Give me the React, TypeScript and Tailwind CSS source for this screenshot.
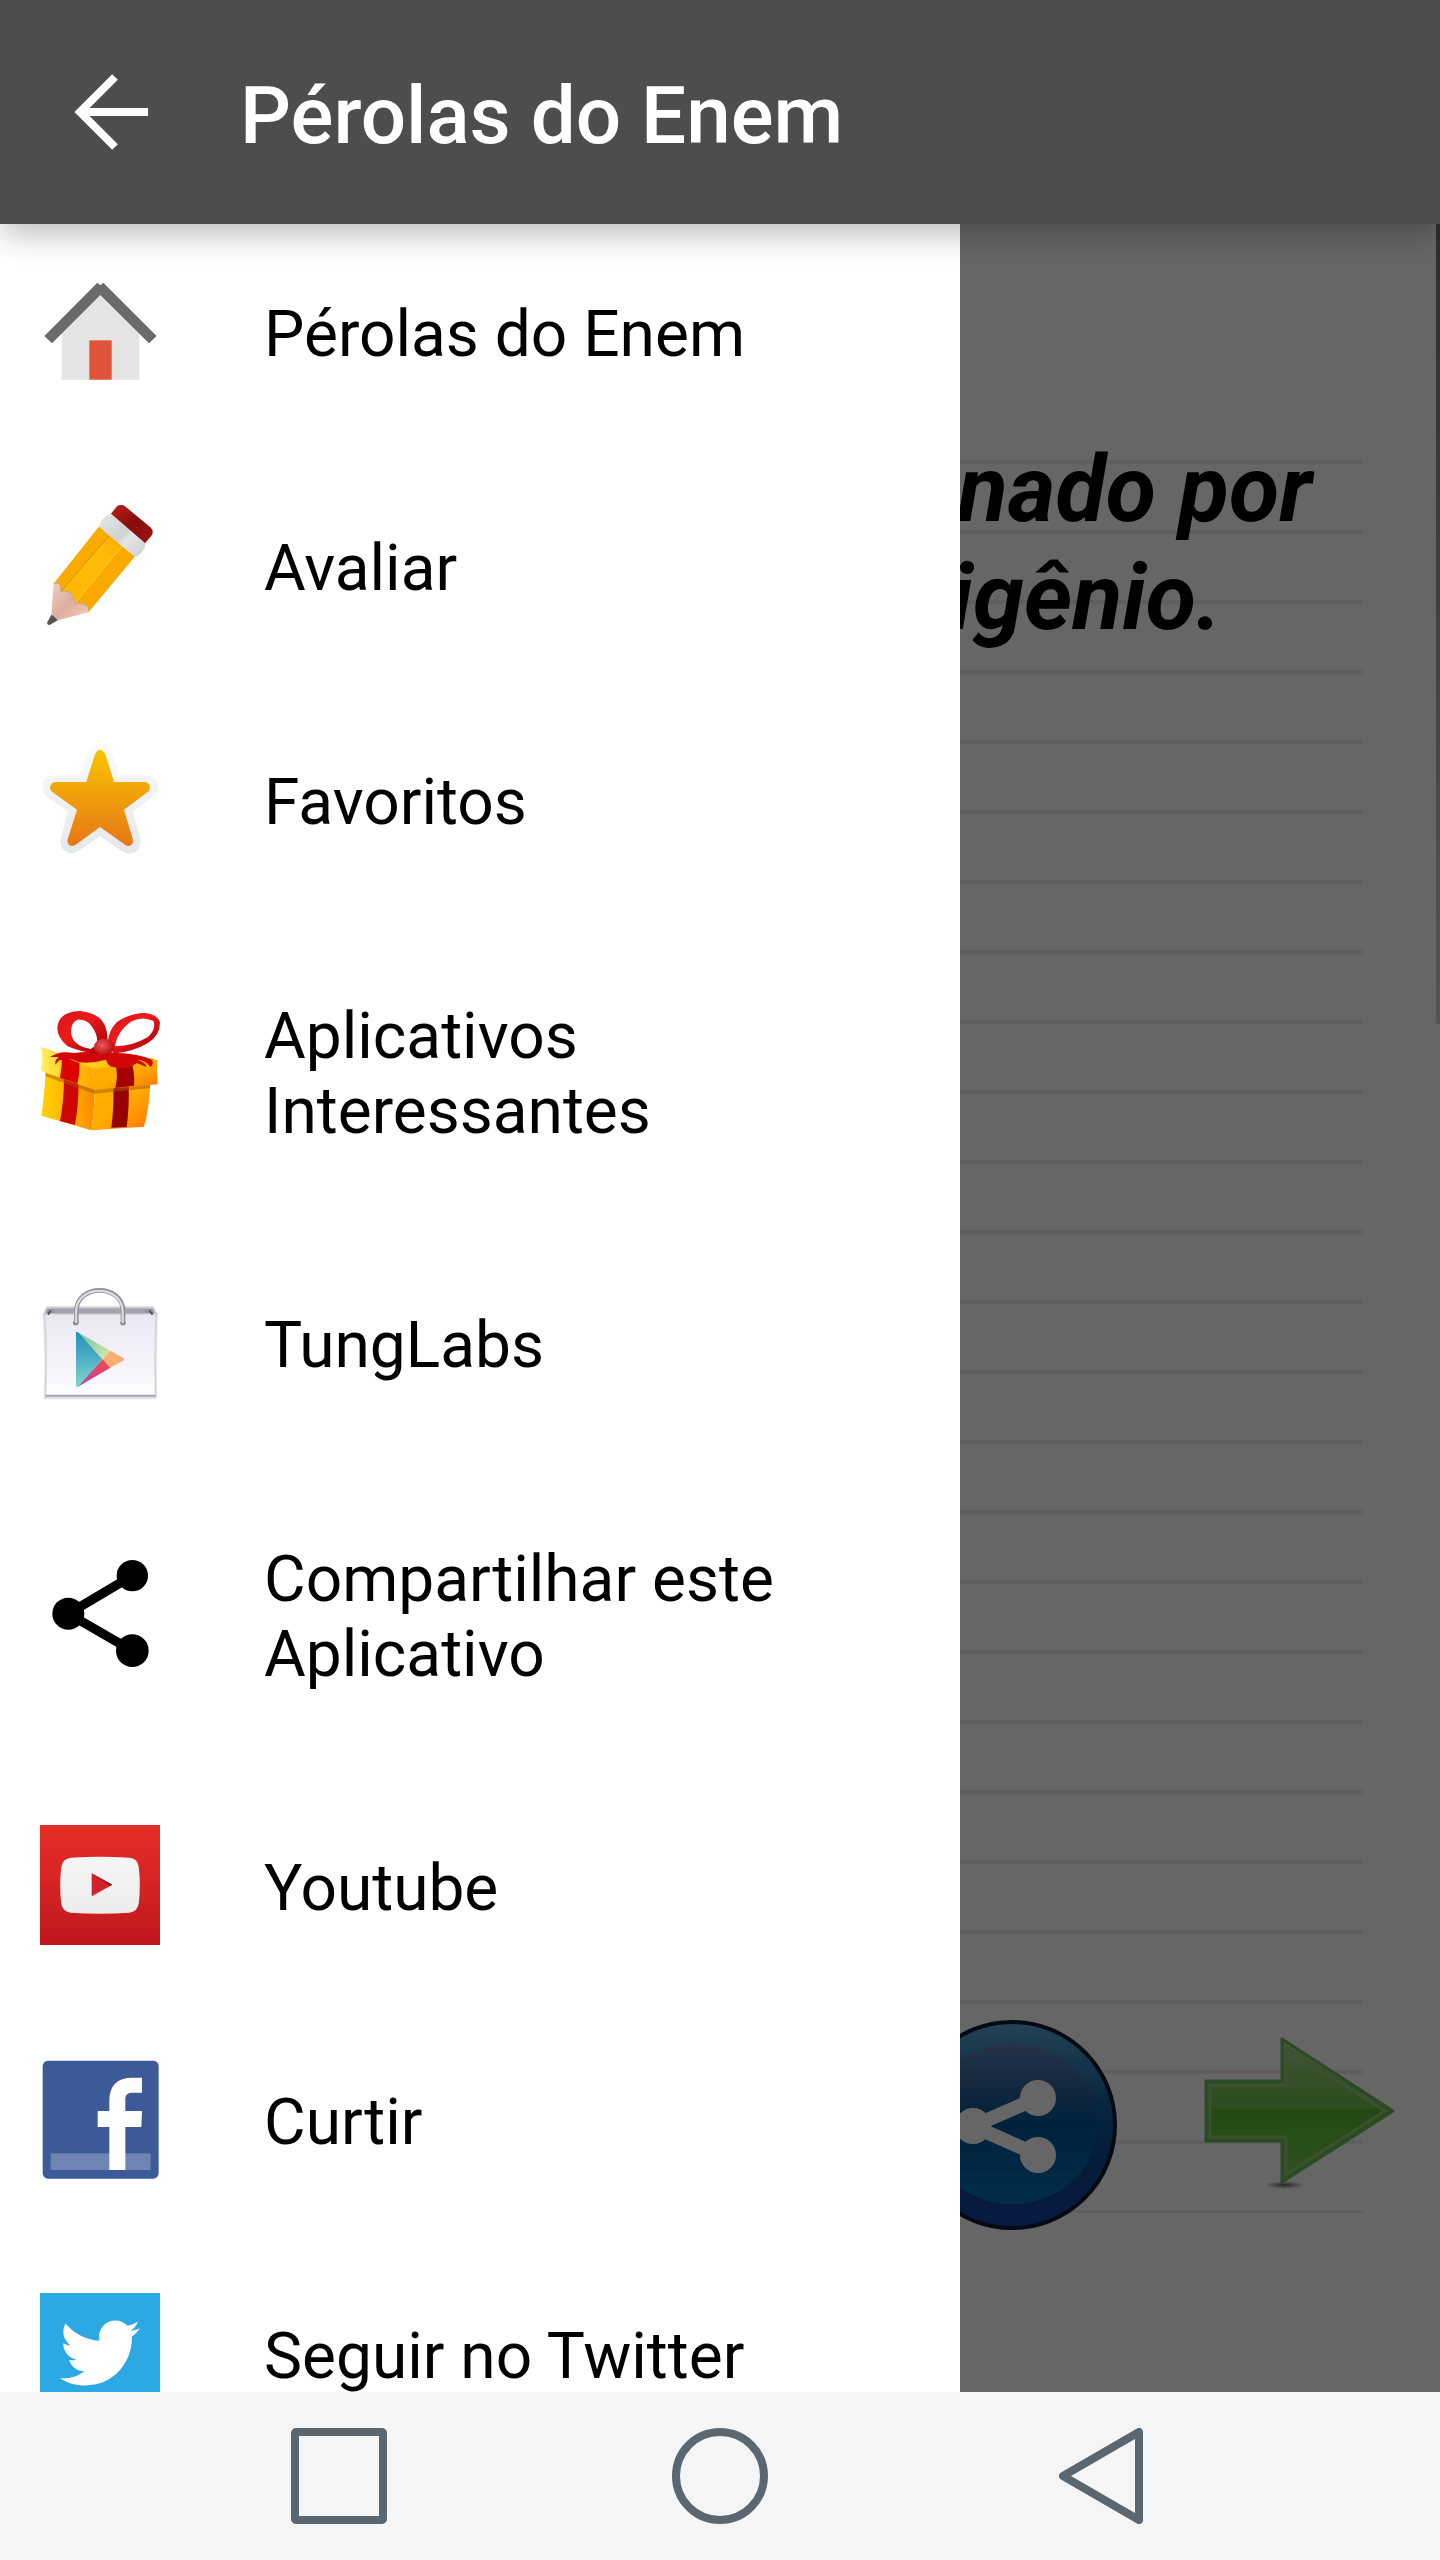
import type { ReactNode } from "react";
import { FaTwitter } from "react-icons/fa";

interface MenuItem {
  label: string;
  icon: ReactNode;
}

function HomeIcon() {
  return (
    <svg viewBox="60 33 360 360" className="size-full">
      <path d="M125 218 L241 100 L358 218 V359 H125 Z" fill="#e4e4e4" />
      <rect x="208" y="241" width="67" height="118" fill="#e15339" />
      <path
        d="M73 228 L232 68 L241 76 L250 68 L410 228 L387 250 L241 105 L96 250 Z"
        fill="#6a6a6a"
      />
    </svg>
  );
}

function PencilIcon() {
  return (
    <svg viewBox="60 45 360 360" className="size-full">
      <defs>
        <linearGradient id="pencilRed" x1="0" y1="0" x2="1" y2="1">
          <stop offset="0" stopColor="#c01f1c" />
          <stop offset="0.5" stopColor="#860d0b" />
          <stop offset="1" stopColor="#a01614" />
        </linearGradient>
        <linearGradient id="pencilBody" x1="0" y1="1" x2="1" y2="0">
          <stop offset="0" stopColor="#ffb400" />
          <stop offset="0.6" stopColor="#ffbc0a" />
          <stop offset="1" stopColor="#f5a500" />
        </linearGradient>
        <linearGradient id="pencilWood" x1="0" y1="0" x2="1" y2="1">
          <stop offset="0" stopColor="#efcfc4" />
          <stop offset="0.5" stopColor="#dcae9f" />
          <stop offset="1" stopColor="#f6cfae" />
        </linearGradient>
        <linearGradient id="pencilMetal" x1="0" y1="0" x2="1" y2="1">
          <stop offset="0" stopColor="#e6e8e8" />
          <stop offset="0.5" stopColor="#cfd2d3" />
          <stop offset="0.6" stopColor="#e4e6e6" />
          <stop offset="1" stopColor="#cbcecf" />
        </linearGradient>
      </defs>
      <path
        d="M272 72 L290 50 Q300 41 313 47 L391 112 Q402 122 396 135 L374 161 Z"
        fill="url(#pencilRed)"
      />
      <path
        d="M237 110 L345 199 L205 367 L165 340 L122 305 L101 281 Z"
        fill="url(#pencilBody)"
      />
      <path d="M237 110 L268 136 L122 305 L101 281 Z" fill="#f9ac00" />
      <path d="M307 168 L345 199 L205 367 L165 340 Z" fill="#f9a900" />
      <path d="M268 136 L122 305" stroke="#dd9200" strokeWidth="3" />
      <path d="M307 168 L165 340" stroke="#ffcf3d" strokeWidth="3" />
      <path
        d="M237 110 Q238 100 246 90 Q258 72 274 72 L374 158 Q380 170 368 182 Q357 198 345 201 Z"
        fill="url(#pencilMetal)"
      />
      <path
        d="M101 281 Q118 275 122 290 L122 304 Q145 300 156 314 Q166 325 164 342 Q185 335 200 347 Q209 355 205 367 L113 391 L94 374 Z"
        fill="url(#pencilWood)"
      />
      <path
        d="M101 281 Q118 275 122 290 L122 304 Q145 300 156 314 Q166 325 164 342 Q185 335 200 347 Q207 353 206 362"
        fill="none"
        stroke="#c9a58f"
        strokeWidth="3"
      />
      <path d="M94 374 Q103 378 113 391 L89 405 Q80 405 82 397 Z" fill="#555" />
    </svg>
  );
}

function StarIcon() {
  return (
    <svg viewBox="60 27 360 360" className="size-full">
      <defs>
        <linearGradient id="starFill" x1="0" y1="0" x2="0" y2="1">
          <stop offset="0" stopColor="#fac400" />
          <stop offset="1" stopColor="#e67717" />
        </linearGradient>
        <linearGradient id="starEdge" x1="0" y1="0" x2="0" y2="1">
          <stop offset="0" stopColor="#fbfbfb" />
          <stop offset="1" stopColor="#e5e8e9" />
        </linearGradient>
      </defs>
      <path
        d="M207 62 Q216 40 240 38 Q264 40 273 62 L298 136 H376 Q414 138 415 172 Q414 186 402 196 L338 246 L361 326 Q364 366 330 371 Q318 372 306 364 L240 318 L174 364 Q162 372 150 370 Q116 362 122 326 L144 246 L82 200 Q66 188 68 170 Q72 136 106 136 H182 Z"
        fill="url(#starEdge)"
      />
      <path
        d="M225 72 Q240 46 256 72 L282 156 H374 Q390 158 390 172 Q390 180 384 185 L312 239 L338 326 Q342 345 327 348 Q321 348 316 345 L240 291 L166 345 Q160 348 154 348 Q140 344 143 328 L171 239 L97 186 Q90 180 90 172 Q92 158 106 156 H199 Z"
        fill="url(#starFill)"
      />
    </svg>
  );
}

function GiftIcon() {
  return (
    <svg viewBox="60 60 360 360" className="size-full">
      <defs>
        <linearGradient id="giftLeft" x1="0" y1="0" x2="1" y2="0">
          <stop offset="0" stopColor="#ffd000" />
          <stop offset="0.6" stopColor="#ffae00" />
          <stop offset="1" stopColor="#f98a00" />
        </linearGradient>
        <linearGradient id="giftRight" x1="0" y1="0" x2="1" y2="1">
          <stop offset="0" stopColor="#ffb000" />
          <stop offset="0.5" stopColor="#ffab00" />
          <stop offset="1" stopColor="#ff7400" />
        </linearGradient>
        <linearGradient id="giftTop" x1="0" y1="0" x2="1" y2="0">
          <stop offset="0" stopColor="#fff06a" />
          <stop offset="0.4" stopColor="#ffd21c" />
          <stop offset="1" stopColor="#ffa400" />
        </linearGradient>
        <linearGradient id="giftBow" x1="0" y1="0" x2="1" y2="1">
          <stop offset="0" stopColor="#d2161b" />
          <stop offset="0.4" stopColor="#ee1a1c" />
          <stop offset="1" stopColor="#9c0006" />
        </linearGradient>
        <radialGradient id="giftKnot" cx="0.4" cy="0.4" r="0.6">
          <stop offset="0" stopColor="#ea5a5c" />
          <stop offset="1" stopColor="#bd0c14" />
        </radialGradient>
      </defs>
      <path d="M77 240 Q74 310 64 374 L214 418 Q226 350 222 280 Z" fill="url(#giftLeft)" />
      <path d="M222 285 Q226 350 214 418 L372 407 Q388 350 391 275 Z" fill="url(#giftRight)" />
      <path d="M132 258 Q132 330 120 390 L165 402 Q176 340 176 270 Z" fill="#cc0505" />
      <path d="M280 285 Q282 350 274 410 L320 408 Q328 350 326 280 Z" fill="#960000" />
      <path d="M77 240 L222 294 L391 280 L390 292 L222 308 L77 256 Z" fill="#a85a00" opacity="0.5" />
      <path d="M64 168 L110 184 L270 190 L398 202 L412 210 L220 232 L64 180 Z" fill="url(#giftTop)" />
      <path d="M64 168 Q70 205 62 240 L224 297 Q216 260 219 232 Z" fill="url(#giftTop)" />
      <path d="M219 232 Q216 260 224 297 L413 280 Q409 245 412 208 Z" fill="url(#giftRight)" />
      <path d="M126 196 Q126 230 120 260 L172 278 Q180 245 178 216 Z" fill="#df0404" />
      <path d="M288 225 Q294 255 286 291 L342 284 Q345 245 335 216 Z" fill="#a50000" />
      <path
        d="M90 198 Q120 178 160 186 L226 180 L290 186 Q350 186 394 206 Q404 214 392 228 Q376 206 350 206 Q378 214 380 228 L350 216 Q320 240 280 228 Q264 226 258 206 Q215 218 178 214 Q150 200 124 206 Q110 210 108 222 Q100 212 116 198 Z"
        fill="#d20508"
      />
      <path
        fillRule="evenodd"
        d="M240 190 Q170 180 142 165 Q112 140 112 112 Q114 62 180 60 Q238 66 254 102 Q264 124 262 148 Z M232 160 Q234 130 214 104 Q198 84 172 86 Q150 96 154 130 Q160 165 212 174 Z"
        fill="url(#giftBow)"
      />
      <path
        fillRule="evenodd"
        d="M264 150 Q266 120 290 94 Q330 66 376 66 Q412 70 420 94 Q420 134 384 156 Q335 184 280 188 Z M286 160 Q292 122 332 92 Q370 74 400 90 Q410 112 384 138 Q340 164 286 166 Z"
        fill="url(#giftBow)"
      />
      <ellipse cx="252" cy="168" rx="30" ry="25" fill="url(#giftKnot)" />
    </svg>
  );
}

function PlayStoreIcon() {
  return (
    <svg viewBox="60 36 360 360" className="size-full">
      <defs>
        <linearGradient id="bagFront" x1="0" y1="0" x2="0" y2="1">
          <stop offset="0" stopColor="#e9e8f2" />
          <stop offset="0.5" stopColor="#f3f1f9" />
          <stop offset="1" stopColor="#fdfdfe" />
        </linearGradient>
        <linearGradient id="bagBlue" x1="0" y1="0" x2="0" y2="1">
          <stop offset="0" stopColor="#2490b8" />
          <stop offset="0.5" stopColor="#4fb0c6" />
          <stop offset="1" stopColor="#7ed8cd" />
        </linearGradient>
        <linearGradient id="bagRed" x1="0" y1="1" x2="1" y2="0">
          <stop offset="0" stopColor="#a44fb0" />
          <stop offset="0.5" stopColor="#d94678" />
          <stop offset="1" stopColor="#f4484f" />
        </linearGradient>
        <linearGradient id="bagGreen" x1="0" y1="0" x2="1" y2="1">
          <stop offset="0" stopColor="#6cc2a8" />
          <stop offset="1" stopColor="#e2eaa6" />
        </linearGradient>
      </defs>
      <path
        d="M82 112 H398 L410 132 Q404 260 408 384 H75 Q80 250 72 132 Z"
        fill="#e3e3e6"
        stroke="#e3e3e6"
        strokeWidth="8"
        strokeLinejoin="round"
      />
      <path d="M82 114 H398 L408 132 H74 Z" fill="#95949d" stroke="#c5c4cc" strokeWidth="4" />
      <path d="M104 116 V132 H374 V116 Z" fill="#a5a4ad" />
      <path d="M74 132 H408 Q402 260 406 380 H77 Q82 250 74 132 Z" fill="url(#bagFront)" stroke="#cbcad2" strokeWidth="3" />
      <path d="M77 377 H406" stroke="#a6a5b4" strokeWidth="6" />
      <path d="M84 134 L92 122 M398 134 L388 122" stroke="#55545d" strokeWidth="6" />
      <ellipse cx="167" cy="159" rx="8" ry="7" fill="#77767f" />
      <ellipse cx="309" cy="159" rx="8" ry="7" fill="#77767f" />
      <path
        d="M169 158 V124 C169 40 309 40 309 124 V158"
        fill="none"
        stroke="#8f8e98"
        strokeWidth="14"
        strokeLinecap="round"
      />
      <path
        d="M168 156 V124 C170 42 306 42 308 124 V156"
        fill="none"
        stroke="#dbdae2"
        strokeWidth="7"
        strokeLinecap="round"
      />
      <path d="M168 186 Q170 183 178 190 L248 268 L176 350 Q168 353 168 346 Z" fill="url(#bagBlue)" />
      <path d="M176 188 L271 242 L248 268 Z" fill="url(#bagGreen)" />
      <path d="M271 242 L311 265 Q314 268 311 271 L271 293 L248 268 Z" fill="#fbae72" />
      <path d="M248 268 L271 293 L174 350 Z" fill="url(#bagRed)" />
    </svg>
  );
}

function ShareIcon() {
  return (
    <svg viewBox="60 41 360 360" className="size-full">
      <path d="M337 106 L145 220 L337 331" fill="none" stroke="#000" strokeWidth="28" />
      <circle cx="337" cy="106" r="47" />
      <circle cx="145" cy="220" r="48" />
      <circle cx="337" cy="331" r="49" />
    </svg>
  );
}

function YoutubeIcon() {
  return (
    <svg viewBox="60 45 360 360" className="size-full">
      <defs>
        <linearGradient id="ytRed" x1="0" y1="0" x2="0" y2="1">
          <stop offset="0" stopColor="#e62d27" />
          <stop offset="0.4" stopColor="#d92525" />
          <stop offset="1" stopColor="#bf171d" />
        </linearGradient>
        <linearGradient id="ytWhite" x1="0" y1="0" x2="0" y2="1">
          <stop offset="0" stopColor="#f6f6f6" />
          <stop offset="1" stopColor="#ececec" />
        </linearGradient>
      </defs>
      <rect x="60" y="45" width="360" height="360" fill="url(#ytRed)" />
      <path
        d="M152 143 Q240 137 328 143 Q352 145 356 170 Q363 226 356 282 Q352 305 328 308 Q240 314 152 308 Q128 305 124 282 Q117 226 124 170 Q128 146 152 143 Z"
        fill="url(#ytWhite)"
      />
      <path d="M215 190 L277 224 L215 259 Z" fill="#d3222a" />
      <path d="M215 190 L277 224 L270 228 Z" fill="#8d1c1e" />
    </svg>
  );
}

function FacebookIcon() {
  return (
    <svg viewBox="60 57 360 360" className="size-full">
      <rect x="68" y="62" width="348" height="354" rx="16" fill="#3d5a98" />
      <rect x="92" y="340" width="300" height="50" fill="#6f86b4" />
      <path
        d="M268 390 V261 H233 V213 H268 V182 C268 136 292 113 336 113 H366 V158 H338 C322 158 316 164 316 180 V213 H366 L364 261 H316 V390 Z"
        fill="#fff"
      />
    </svg>
  );
}

function TwitterIcon() {
  return (
    <span className="flex size-full items-center justify-center bg-[#2ca8e2]">
      <FaTwitter className="size-20 text-white" />
    </span>
  );
}

function BackArrow() {
  return (
    <svg viewBox="0 0 76 76" className="size-[76px]">
      <path
        d="M41 3 L6 38 L41 73 M6 38 H74"
        fill="none"
        stroke="#fff"
        strokeWidth="8"
      />
    </svg>
  );
}

function ShareBadge() {
  return (
    <svg viewBox="0 0 210 210" className="size-[210px]">
      <defs>
        <linearGradient id="badgeRim" x1="0" y1="0" x2="0" y2="1">
          <stop offset="0" stopColor="#5aa8d2" />
          <stop offset="0.4" stopColor="#14609c" />
          <stop offset="0.7" stopColor="#0a4590" />
          <stop offset="1" stopColor="#1640a8" />
        </linearGradient>
        <linearGradient id="badgeFace" x1="0" y1="0" x2="0" y2="1">
          <stop offset="0" stopColor="#5f7fb4" />
          <stop offset="0.3" stopColor="#2c6098" />
          <stop offset="0.5" stopColor="#00559c" />
          <stop offset="1" stopColor="#0070b4" />
        </linearGradient>
      </defs>
      <circle cx="105" cy="105" r="103" fill="url(#badgeRim)" stroke="#0a1830" strokeWidth="4" />
      <ellipse cx="105" cy="104" rx="86" ry="80" fill="url(#badgeFace)" />
      <path d="M131 78 L66 106 L131 135" fill="none" stroke="#fff" strokeWidth="14" />
      <circle cx="131" cy="78" r="18" fill="#fff" />
      <circle cx="66" cy="106" r="18" fill="#fff" />
      <circle cx="131" cy="135" r="18" fill="#fff" />
    </svg>
  );
}

function NextArrow() {
  return (
    <svg viewBox="0 0 192 154" className="h-[154px] w-48">
      <defs>
        <linearGradient id="nextFill" x1="0" y1="0" x2="0" y2="1">
          <stop offset="0" stopColor="#a8e08c" />
          <stop offset="0.25" stopColor="#86c56c" />
          <stop offset="0.48" stopColor="#6fbf4c" />
          <stop offset="0.5" stopColor="#5cb42c" />
          <stop offset="0.65" stopColor="#5fc238" />
          <stop offset="1" stopColor="#78c858" />
        </linearGradient>
        <radialGradient id="nextShade">
          <stop offset="0" stopColor="#000" stopOpacity="0.6" />
          <stop offset="1" stopColor="#000" stopOpacity="0" />
        </radialGradient>
      </defs>
      <ellipse cx="81" cy="149" rx="20" ry="4" fill="url(#nextShade)" />
      <path
        d="M2 45 H78 V3 L189 75 L78 146 V105 H2 Z"
        fill="url(#nextFill)"
        stroke="#6ab85e"
        strokeWidth="3"
        strokeLinejoin="round"
      />
      <path
        d="M6 49 H82 V12 L181 75 L82 138 V101 H6 Z"
        fill="none"
        stroke="#98c878"
        strokeWidth="3"
      />
    </svg>
  );
}

const menuItems: MenuItem[] = [
  { label: "Pérolas do Enem", icon: <HomeIcon /> },
  { label: "Avaliar", icon: <PencilIcon /> },
  { label: "Favoritos", icon: <StarIcon /> },
  { label: "Aplicativos Interessantes", icon: <GiftIcon /> },
  { label: "TungLabs", icon: <PlayStoreIcon /> },
  { label: "Compartilhar este Aplicativo", icon: <ShareIcon /> },
  { label: "Youtube", icon: <YoutubeIcon /> },
  { label: "Curtir", icon: <FacebookIcon /> },
  { label: "Seguir no Twitter", icon: <TwitterIcon /> },
];

export default function App() {
  return (
    <div className="flex h-screen flex-col overflow-hidden bg-white font-[Roboto,sans-serif] text-black">
      <header className="relative z-10 flex h-56 shrink-0 items-center gap-[90px] bg-[#4d4d4d] pl-[74px] shadow-[0_14px_28px_-2px_rgba(0,0,0,0.24)]">
        <button type="button" aria-label="Voltar">
          <BackArrow />
        </button>
        <h1 className="pt-2 text-[80px] leading-24 font-medium text-white">
          Pérolas do Enem
        </h1>
      </header>

      <div className="relative min-h-0 flex-1 overflow-hidden">
        <main className="flex h-full flex-col">
          {/* ruled paper */}
          <div className="absolute top-[236px] right-[77px] left-0 h-[1753px] bg-[repeating-linear-gradient(to_bottom,#f4f4f4_0px,#e6e6e6_2px,#f4f4f4_4px,transparent_5px,transparent_70px)]" />
          <div className="absolute top-0 right-0 h-[800px] w-1 bg-linear-to-b from-neutral-500 to-neutral-300" />

          <p className="relative mt-[212px] pr-32 text-right text-[92px] leading-[108px] font-bold italic">
            nado por
            <span className="block pr-[90px]">igênio.</span>
          </p>

          <div className="relative mt-auto mb-[162px] flex items-start justify-end gap-[87px] pr-11">
            <button type="button" aria-label="Compartilhar">
              <ShareBadge />
            </button>
            <button type="button" aria-label="Próxima" className="pt-4">
              <NextArrow />
            </button>
          </div>
        </main>

        <div className="absolute inset-0 bg-black/60" />

        <nav className="absolute inset-y-0 left-0 w-2/3 overflow-hidden bg-white">
          <ul className="flex flex-col gap-[114px] px-10 pt-[47px]">
            {menuItems.map((item) => (
              <li key={item.label}>
                <a href="#" className="flex items-center gap-[104px]">
                  <span className="size-[120px] shrink-0">{item.icon}</span>
                  <span className="pt-[26px] pb-[19px] text-[64px] leading-[75px]">
                    {item.label}
                  </span>
                </a>
              </li>
            ))}
          </ul>
        </nav>
      </div>

      <footer className="flex h-[168px] shrink-0 items-center justify-center gap-[285px] bg-[#f5f5f5]">
        <button type="button" aria-label="Recentes">
          <svg viewBox="0 0 96 96" className="size-24">
            <rect x="4" y="4" width="88" height="88" rx="1" fill="none" stroke="#5b6770" strokeWidth="8" strokeLinejoin="round" />
          </svg>
        </button>
        <button type="button" aria-label="Início">
          <svg viewBox="0 0 96 96" className="size-24">
            <circle cx="48" cy="48" r="44" fill="none" stroke="#5b6770" strokeWidth="8" />
          </svg>
        </button>
        <button type="button" aria-label="Retornar">
          <svg viewBox="0 0 96 96" className="size-24">
            <path d="M10 48 L86 4 V92 Z" fill="none" stroke="#5b6770" strokeWidth="8" strokeLinejoin="round" />
          </svg>
        </button>
      </footer>
    </div>
  );
}
